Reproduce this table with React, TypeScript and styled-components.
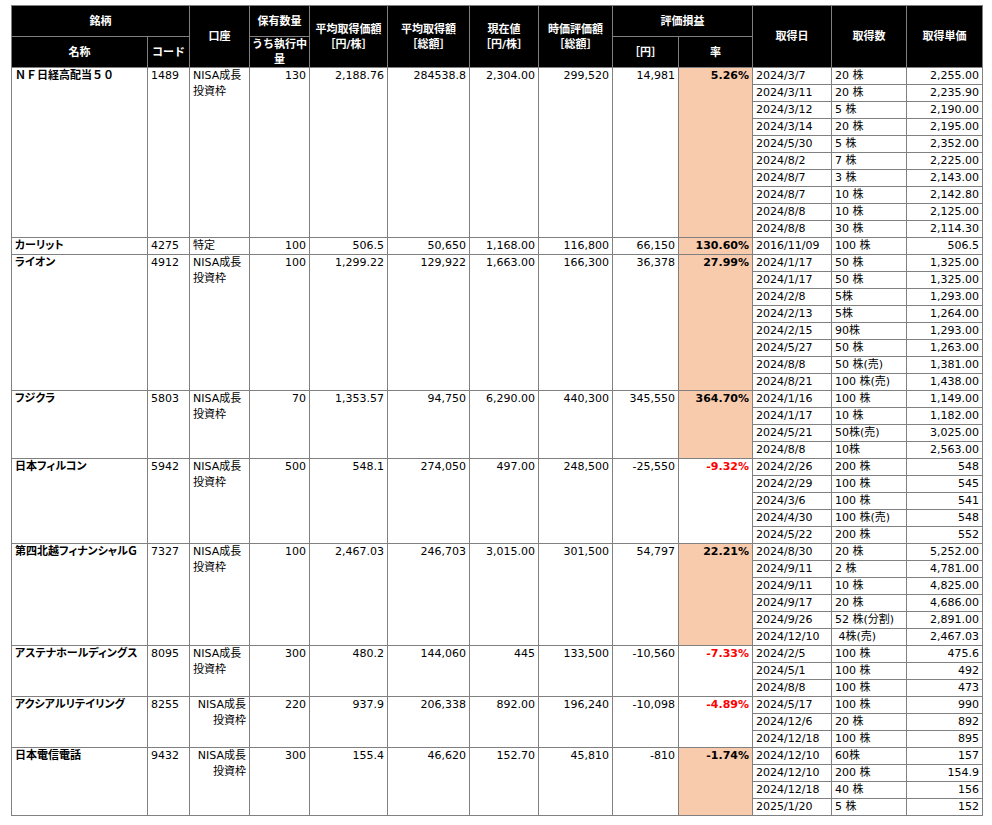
import React from "react";
import styled, { createGlobalStyle } from "styled-components";

const Global = createGlobalStyle`
  html, body { margin: 0; padding: 0; background: #ffffff; }
  body { font-family: "DejaVu Sans", "Noto Sans CJK JP", sans-serif; }
`;

const Page = styled.div`
  padding: 5px 10px 0 11px;
`;

const Table = styled.table`
  border-collapse: collapse;
  table-layout: fixed;
  width: 971px;
  font-size: 11px;
  color: #000;
  font-family: "DejaVu Sans", "Noto Sans CJK JP", sans-serif;
`;

const Th = styled.th<{ $h?: number }>`
  background: #000;
  color: #fff;
  font-weight: bold;
  text-align: center;
  vertical-align: middle;
  border: 1px solid #7f7f7f;
  padding: 0 2px;
  line-height: 15px;
  height: ${(p) => (p.$h ? `${p.$h}px` : "auto")};
  font-family: "DejaVu Sans", "Noto Sans CJK JP", sans-serif;
`;

const Td = styled.td<{
  $align?: "left" | "right";
  $bold?: boolean;
  $bg?: string;
  $color?: string;
}>`
  border: 1px solid #808080;
  padding: 0 3px;
  height: 16px;
  line-height: 16px;
  vertical-align: top;
  white-space: pre-line;
  overflow: hidden;
  text-align: ${(p) => p.$align ?? "left"};
  font-weight: ${(p) => (p.$bold ? "bold" : "normal")};
  background: ${(p) => p.$bg ?? "#fff"};
  color: ${(p) => p.$color ?? "#000"};
`;

const NameTd = styled(Td)<{ $palt?: boolean }>`
  font-weight: bold;
  white-space: nowrap;
  font-feature-settings: ${(p) => (p.$palt ? '"palt" 1' : "normal")};
`;

const LotTd = styled(Td)`
  white-space: pre;
  vertical-align: middle;
`;

type Lot = [string, string, string];

interface Holding {
  name: string;
  palt: boolean;
  code: string;
  account: string;
  accountAlign: "left" | "right";
  qty: string;
  avgPrice: string;
  avgTotal: string;
  price: string;
  value: string;
  pl: string;
  rate: string;
  rateStyle: "orange" | "red";
  lots: Lot[];
}

const NISA = "NISA成長\n投資枠";

const data: Holding[] = [
  {
    name: "ＮＦ日経高配当５０",
    palt: false,
    code: "1489",
    account: NISA,
    accountAlign: "left",
    qty: "130",
    avgPrice: "2,188.76",
    avgTotal: "284538.8",
    price: "2,304.00",
    value: "299,520",
    pl: "14,981",
    rate: "5.26%",
    rateStyle: "orange",
    lots: [
      ["2024/3/7", "20 株", "2,255.00"],
      ["2024/3/11", "20 株", "2,235.90"],
      ["2024/3/12", "5 株", "2,190.00"],
      ["2024/3/14", "20 株", "2,195.00"],
      ["2024/5/30", "5 株", "2,352.00"],
      ["2024/8/2", "7 株", "2,225.00"],
      ["2024/8/7", "3 株", "2,143.00"],
      ["2024/8/7", "10 株", "2,142.80"],
      ["2024/8/8", "10 株", "2,125.00"],
      ["2024/8/8", "30 株", "2,114.30"],
    ],
  },
  {
    name: "カーリット",
    palt: true,
    code: "4275",
    account: "特定",
    accountAlign: "left",
    qty: "100",
    avgPrice: "506.5",
    avgTotal: "50,650",
    price: "1,168.00",
    value: "116,800",
    pl: "66,150",
    rate: "130.60%",
    rateStyle: "orange",
    lots: [["2016/11/09", "100 株", "506.5"]],
  },
  {
    name: "ライオン",
    palt: true,
    code: "4912",
    account: NISA,
    accountAlign: "left",
    qty: "100",
    avgPrice: "1,299.22",
    avgTotal: "129,922",
    price: "1,663.00",
    value: "166,300",
    pl: "36,378",
    rate: "27.99%",
    rateStyle: "orange",
    lots: [
      ["2024/1/17", "50 株", "1,325.00"],
      ["2024/1/17", "50 株", "1,325.00"],
      ["2024/2/8", "5株", "1,293.00"],
      ["2024/2/13", "5株", "1,264.00"],
      ["2024/2/15", "90株", "1,293.00"],
      ["2024/5/27", "50 株", "1,263.00"],
      ["2024/8/8", "50 株(売)", "1,381.00"],
      ["2024/8/21", "100 株(売)", "1,438.00"],
    ],
  },
  {
    name: "フジクラ",
    palt: true,
    code: "5803",
    account: NISA,
    accountAlign: "left",
    qty: "70",
    avgPrice: "1,353.57",
    avgTotal: "94,750",
    price: "6,290.00",
    value: "440,300",
    pl: "345,550",
    rate: "364.70%",
    rateStyle: "orange",
    lots: [
      ["2024/1/16", "100 株", "1,149.00"],
      ["2024/1/17", "10 株", "1,182.00"],
      ["2024/5/21", "50株(売)", "3,025.00"],
      ["2024/8/8", "10株", "2,563.00"],
    ],
  },
  {
    name: "日本フィルコン",
    palt: true,
    code: "5942",
    account: NISA,
    accountAlign: "left",
    qty: "500",
    avgPrice: "548.1",
    avgTotal: "274,050",
    price: "497.00",
    value: "248,500",
    pl: "-25,550",
    rate: "-9.32%",
    rateStyle: "red",
    lots: [
      ["2024/2/26", "200 株", "548"],
      ["2024/2/29", "100 株", "545"],
      ["2024/3/6", "100 株", "541"],
      ["2024/4/30", "100 株(売)", "548"],
      ["2024/5/22", "200 株", "552"],
    ],
  },
  {
    name: "第四北越フィナンシャルＧ",
    palt: true,
    code: "7327",
    account: NISA,
    accountAlign: "left",
    qty: "100",
    avgPrice: "2,467.03",
    avgTotal: "246,703",
    price: "3,015.00",
    value: "301,500",
    pl: "54,797",
    rate: "22.21%",
    rateStyle: "orange",
    lots: [
      ["2024/8/30", "20 株", "5,252.00"],
      ["2024/9/11", "2 株", "4,781.00"],
      ["2024/9/11", "10 株", "4,825.00"],
      ["2024/9/17", "20 株", "4,686.00"],
      ["2024/9/26", "52 株(分割)", "2,891.00"],
      ["2024/12/10", " 4株(売)", "2,467.03"],
    ],
  },
  {
    name: "アステナホールディングス",
    palt: true,
    code: "8095",
    account: NISA,
    accountAlign: "left",
    qty: "300",
    avgPrice: "480.2",
    avgTotal: "144,060",
    price: "445",
    value: "133,500",
    pl: "-10,560",
    rate: "-7.33%",
    rateStyle: "red",
    lots: [
      ["2024/2/5", "100 株", "475.6"],
      ["2024/5/1", "100 株", "492"],
      ["2024/8/8", "100 株", "473"],
    ],
  },
  {
    name: "アクシアルリテイリング",
    palt: true,
    code: "8255",
    account: NISA,
    accountAlign: "right",
    qty: "220",
    avgPrice: "937.9",
    avgTotal: "206,338",
    price: "892.00",
    value: "196,240",
    pl: "-10,098",
    rate: "-4.89%",
    rateStyle: "red",
    lots: [
      ["2024/5/17", "100 株", "990"],
      ["2024/12/6", "20 株", "892"],
      ["2024/12/18", "100 株", "895"],
    ],
  },
  {
    name: "日本電信電話",
    palt: true,
    code: "9432",
    account: NISA,
    accountAlign: "right",
    qty: "300",
    avgPrice: "155.4",
    avgTotal: "46,620",
    price: "152.70",
    value: "45,810",
    pl: "-810",
    rate: "-1.74%",
    rateStyle: "orange",
    lots: [
      ["2024/12/10", "60株", "157"],
      ["2024/12/10", "200 株", "154.9"],
      ["2024/12/18", "40 株", "156"],
      ["2025/1/20", "5 株", "152"],
    ],
  },
];

const widths = [136, 42, 60, 60, 78, 82, 69, 74, 66, 74, 79, 75, 76];

const ORANGE = "#f8cbad";
const RED = "#ff0000";

function HoldingRows({ h }: { h: Holding }) {
  const n = h.lots.length;
  return (
    <>
      {h.lots.map((lot, i) => (
        <tr key={i}>
          {i === 0 && (
            <>
              <NameTd rowSpan={n} $palt={h.palt}>
                {h.name}
              </NameTd>
              <Td rowSpan={n}>{h.code}</Td>
              <Td rowSpan={n} $align={h.accountAlign}>
                {h.account}
              </Td>
              <Td rowSpan={n} $align="right">
                {h.qty}
              </Td>
              <Td rowSpan={n} $align="right">
                {h.avgPrice}
              </Td>
              <Td rowSpan={n} $align="right">
                {h.avgTotal}
              </Td>
              <Td rowSpan={n} $align="right">
                {h.price}
              </Td>
              <Td rowSpan={n} $align="right">
                {h.value}
              </Td>
              <Td rowSpan={n} $align="right">
                {h.pl}
              </Td>
              <Td
                rowSpan={n}
                $align="right"
                $bold
                $bg={h.rateStyle === "orange" ? ORANGE : "#fff"}
                $color={h.rateStyle === "red" ? RED : "#000"}
              >
                {h.rate}
              </Td>
            </>
          )}
          <LotTd>{lot[0]}</LotTd>
          <LotTd>{lot[1]}</LotTd>
          <LotTd $align="right">{lot[2]}</LotTd>
        </tr>
      ))}
    </>
  );
}

export default function App() {
  return (
    <Page>
      <Global />
      <Table>
        <colgroup>
          {widths.map((w, i) => (
            <col key={i} style={{ width: w }} />
          ))}
        </colgroup>
        <thead>
          <tr>
            <Th colSpan={2} $h={30}>
              銘柄
            </Th>
            <Th rowSpan={2}>口座</Th>
            <Th $h={30}>保有数量</Th>
            <Th rowSpan={2}>
              平均取得価額
              <br />
              ［円/株］
            </Th>
            <Th rowSpan={2}>
              平均取得額
              <br />
              ［総額］
            </Th>
            <Th rowSpan={2}>
              現在値
              <br />
              ［円/株］
            </Th>
            <Th rowSpan={2}>
              時価評価額
              <br />
              ［総額］
            </Th>
            <Th colSpan={2}>評価損益</Th>
            <Th rowSpan={2}>取得日</Th>
            <Th rowSpan={2}>取得数</Th>
            <Th rowSpan={2}>取得単価</Th>
          </tr>
          <tr>
            <Th $h={30}>名称</Th>
            <Th>コード</Th>
            <Th>
              うち執行中
              <br />量
            </Th>
            <Th>［円］</Th>
            <Th>率</Th>
          </tr>
        </thead>
        <tbody>
          {data.map((h) => (
            <HoldingRows key={h.code} h={h} />
          ))}
        </tbody>
      </Table>
    </Page>
  );
}
